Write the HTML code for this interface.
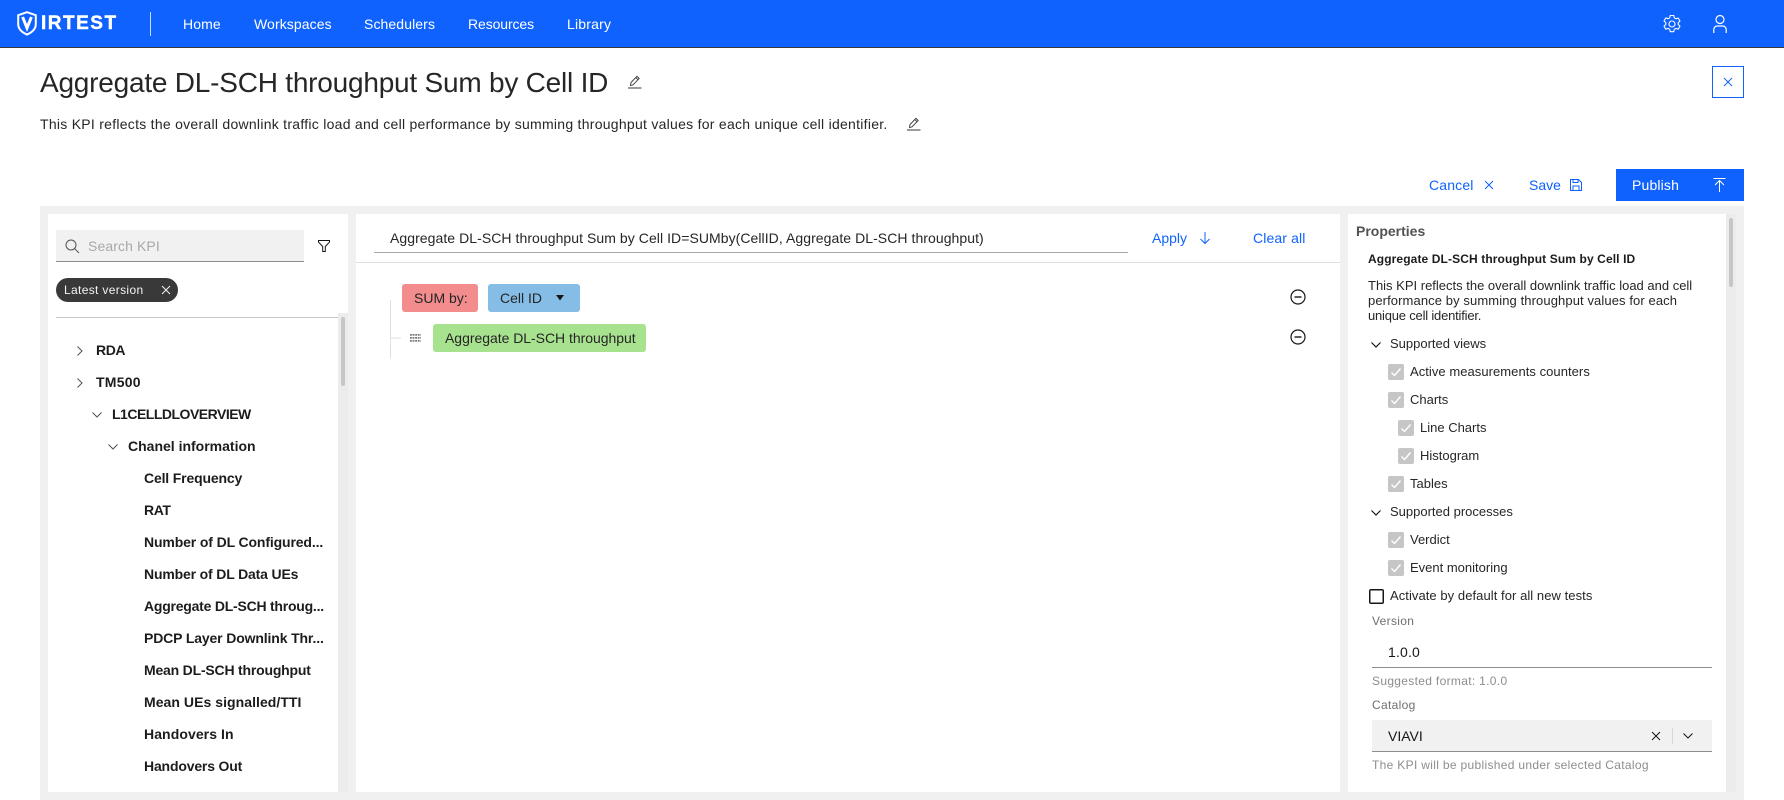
<!DOCTYPE html>
<html lang="en"><head><meta charset="utf-8"><title>Virtest KPI</title>
<style>
html,body{margin:0;padding:0;width:1784px;height:800px;overflow:hidden;background:#fff;font-family:"Liberation Sans",sans-serif;color:#161616}
.a{position:absolute}
.t{position:absolute;height:20px;line-height:20px;white-space:nowrap;font-size:14px}
.b{font-weight:700;color:#1c1c1c}
.w{color:#fff}
.l{color:#0f62fe}
.s{font-size:12px}
.m{font-size:13px}
.h{font-size:12px;letter-spacing:.32px}
.g{color:#6f6f6f}
svg{position:absolute;overflow:visible;fill:none}
.cb{position:absolute;width:16px;height:16px;background:#c6c6c6;border-radius:2px}
.cb svg{left:0;top:0}
</style></head><body>

<!-- NAV -->
<div class="a" style="left:0;top:0;width:1784px;height:47px;background:#0f62fe;border-bottom:1px solid #393939"></div>
<svg style="left:17px;top:11px" width="20" height="25" viewBox="0 0 20 25"><path d="M10 1.200 L18.800 4.200 V13 C18.800 18 14.500 21.600 10 23.600 C5.500 21.600 1.200 18 1.200 13 V4.200 Z" stroke="#fff" stroke-width="2"/><path d="M5.600 6 L10 17 L14.400 6" stroke="#fff" stroke-width="3"/></svg>
<div class="t w b" style="left:41px;top:14px;font-size:19px;letter-spacing:1.500px;color:#fff;-webkit-text-stroke:.4px #fff">IRTEST</div>
<div class="a" style="left:150px;top:12px;width:1px;height:24px;background:#c9dcff"></div>
<div class="t w" style="left:183px;top:14px;letter-spacing:.1px">Home</div>
<div class="t w" style="left:254px;top:14px;letter-spacing:.1px">Workspaces</div>
<div class="t w" style="left:364px;top:14px;letter-spacing:.1px">Schedulers</div>
<div class="t w" style="left:468px;top:14px;letter-spacing:-.1px">Resources</div>
<div class="t w" style="left:567px;top:14px;letter-spacing:.2px">Library</div>
<svg style="left:1662px;top:14px" width="20" height="20" viewBox="0 0 20 20"><path d="M8.200 1.500h3.600l.5 2.400 1.600.9 2.300-.8 1.800 3.100-1.800 1.600v1.800l1.800 1.600-1.800 3.100-2.300-.8-1.600.9-.5 2.400H8.200l-.5-2.400-1.600-.9-2.300.8-1.800-3.100 1.800-1.600V8.600L2 7l1.800-3.100 2.300.8 1.600-.9z" stroke="#fff" stroke-width="1.100" stroke-linejoin="round"/><circle cx="10" cy="10" r="3" stroke="#fff" stroke-width="1.100"/></svg>
<svg style="left:1710px;top:14px" width="20" height="20" viewBox="0 0 20 20"><circle cx="10" cy="5.500" r="4" stroke="#fff" stroke-width="1.200"/><path d="M3.800 19v-3.500a3.500 3.500 0 0 1 3.500-3.500h5.400a3.500 3.500 0 0 1 3.500 3.500V19" stroke="#fff" stroke-width="1.200"/></svg>

<!-- HEADER -->
<div class="t" style="left:40px;top:63px;height:40px;line-height:40px;font-size:28px;letter-spacing:-.22px;color:#262626">Aggregate DL-SCH throughput Sum by Cell ID</div>
<svg style="left:627px;top:74px" width="15" height="15" viewBox="0 0 15 15"><path d="M1 14h13.500" stroke="#393939"/><path d="M3.500 11.500l.5-3L10 2.300l2.200 2.200L6 10.800z M8.800 3.500l2.200 2.200" stroke="#393939" stroke-width=".9"/></svg>
<div class="t" style="left:40px;top:114px;letter-spacing:.27px;color:#262626">This KPI reflects the overall downlink traffic load and cell performance by summing throughput values for each unique cell identifier.</div>
<svg style="left:906px;top:116px" width="15" height="15" viewBox="0 0 15 15"><path d="M1 14h13.500" stroke="#393939"/><path d="M3.500 11.500l.5-3L10 2.300l2.200 2.200L6 10.800z M8.800 3.500l2.200 2.200" stroke="#393939" stroke-width=".9"/></svg>
<div class="a" style="left:1712px;top:66px;width:30px;height:30px;border:1px solid #0f62fe"></div>
<svg style="left:1724px;top:78px" width="8" height="8" viewBox="0 0 8 8"><path d="M0 0l8 8M8 0L0 8" stroke="#0f62fe"/></svg>

<!-- ACTIONS -->
<div class="t l" style="left:1429px;top:175px;letter-spacing:.16px">Cancel</div>
<svg style="left:1485px;top:181px" width="8" height="8" viewBox="0 0 8 8"><path d="M0 0l8 8M8 0L0 8" stroke="#0f62fe"/></svg>
<div class="t l" style="left:1529px;top:175px">Save</div>
<svg style="left:1570px;top:179px" width="12" height="12" viewBox="0 0 12 12"><path d="M.5.5h8l3 3v8H.5z M3 .5v3h5v-3 M3 11.500V7h6v4.500" stroke="#0f62fe"/></svg>
<div class="a" style="left:1616px;top:169px;width:128px;height:32px;background:#0f62fe"></div>
<div class="t w" style="left:1632px;top:175px;letter-spacing:.16px">Publish</div>
<svg style="left:1713px;top:178px" width="13" height="14" viewBox="0 0 13 14"><path d="M.5.500h12M6.500 14V3M2 7l4.500-4.500L11 7" stroke="#fff"/></svg>

<!-- WORK AREA -->
<div class="a" style="left:40px;top:206px;width:1704px;height:594px;background:#f0f0f0"></div>
<div class="a" style="left:48px;top:214px;width:300px;height:578px;background:#fff"></div>
<div class="a" style="left:338px;top:313px;width:10px;height:479px;background:#ececec"></div>
<div class="a" style="left:341px;top:317px;width:4px;height:69px;background:#c6c6c6;border-radius:2px"></div>
<div class="a" style="left:356px;top:214px;width:984px;height:578px;background:#fff"></div>
<div class="a" style="left:1348px;top:214px;width:378px;height:578px;background:#fff"></div>
<div class="a" style="left:1726px;top:214px;width:10px;height:578px;background:#ececec"></div>
<div class="a" style="left:1729px;top:218px;width:4px;height:69px;background:#c6c6c6;border-radius:2px"></div>

<!-- LEFT PANEL -->
<div class="a" style="left:56px;top:230px;width:248px;height:31px;background:#f1f1f1;border-bottom:1px solid #8d8d8d"></div>
<svg style="left:65px;top:239px" width="14" height="14" viewBox="0 0 14 14"><circle cx="6" cy="6" r="5" stroke="#525252"/><path d="M9.700 9.700L14 14" stroke="#525252"/></svg>
<div class="t" style="left:88px;top:236px;color:#a8a8a8;letter-spacing:.1px">Search KPI</div>
<svg style="left:318px;top:240px" width="12" height="12" viewBox="0 0 12 12"><path d="M.5.500h11v1.600L7.300 6.500v5H4.700v-5L.5 2.100z" stroke="#161616"/></svg>
<div class="a" style="left:56px;top:278px;width:122px;height:24px;background:#393939;border-radius:12px"></div>
<div class="t s" style="left:64px;top:280px;color:#f4f4f4;letter-spacing:.34px">Latest version</div>
<svg style="left:162px;top:286px" width="8" height="8" viewBox="0 0 8 8"><path d="M0 0l8 8M8 0L0 8" stroke="#f4f4f4"/></svg>
<div class="a" style="left:56px;top:317px;width:282px;height:1px;background:#c6c6c6"></div>

<svg style="left:77px;top:346px" width="6" height="10" viewBox="0 0 6 10"><path d="M.5.500l4.500 4.500-4.500 4.500" stroke="#525252"/></svg>
<div class="t b" style="left:96px;top:340px;letter-spacing:-.4px">RDA</div>
<svg style="left:77px;top:378px" width="6" height="10" viewBox="0 0 6 10"><path d="M.5.500l4.500 4.500-4.500 4.500" stroke="#525252"/></svg>
<div class="t b" style="left:96px;top:372px;letter-spacing:.25px">TM500</div>
<svg style="left:92px;top:412px" width="10" height="6" viewBox="0 0 10 6"><path d="M.5.500L5 5 9.500.5" stroke="#525252"/></svg>
<div class="t b" style="left:112px;top:404px;letter-spacing:-.5px">L1CELLDLOVERVIEW</div>
<svg style="left:108px;top:444px" width="10" height="6" viewBox="0 0 10 6"><path d="M.5.500L5 5 9.500.5" stroke="#525252"/></svg>
<div class="t b" style="left:128px;top:436px">Chanel information</div>
<div class="t b" style="left:144px;top:468px;letter-spacing:-.16px">Cell Frequency</div>
<div class="t b" style="left:144px;top:500px;letter-spacing:-.4px">RAT</div>
<div class="t b" style="left:144px;top:532px;letter-spacing:-.13px">Number of DL Configured...</div>
<div class="t b" style="left:144px;top:564px;letter-spacing:-.16px">Number of DL Data UEs</div>
<div class="t b" style="left:144px;top:596px;letter-spacing:-.23px">Aggregate DL-SCH throug...</div>
<div class="t b" style="left:144px;top:628px;letter-spacing:-.14px">PDCP Layer Downlink Thr...</div>
<div class="t b" style="left:144px;top:660px;letter-spacing:-.2px">Mean DL-SCH throughput</div>
<div class="t b" style="left:144px;top:692px;letter-spacing:.05px">Mean UEs signalled/TTI</div>
<div class="t b" style="left:144px;top:724px;letter-spacing:.08px">Handovers In</div>
<div class="t b" style="left:144px;top:756px;letter-spacing:-.17px">Handovers Out</div>

<!-- CENTER PANEL -->
<div class="t" style="left:390px;top:228px;letter-spacing:.06px;color:#262626">Aggregate DL-SCH throughput Sum by Cell ID=SUMby(CellID, Aggregate DL-SCH throughput)</div>
<div class="a" style="left:374px;top:252px;width:754px;height:1px;background:#a8a8a8"></div>
<div class="a" style="left:356px;top:262px;width:984px;height:1px;background:#e0e0e0"></div>
<div class="t l" style="left:1152px;top:228px">Apply</div>
<svg style="left:1200px;top:232px" width="10" height="12" viewBox="0 0 10 12"><path d="M5 0v11.500M.5 7l4.500 4.500L9.500 7" stroke="#0f62fe"/></svg>
<div class="t l" style="left:1253px;top:228px;letter-spacing:.12px">Clear all</div>

<div class="a" style="left:390px;top:300px;width:1px;height:58px;background:#dde1e6"></div>
<div class="a" style="left:391px;top:337px;width:10px;height:2px;background:#edeff3"></div>
<div class="a" style="left:402px;top:284px;width:76px;height:28px;background:#f28c8d;border-radius:3px"></div>
<div class="t" style="left:414px;top:288px;color:#262626">SUM by:</div>
<div class="a" style="left:488px;top:284px;width:92px;height:28px;background:#85bde6;border-radius:3px"></div>
<div class="t" style="left:500px;top:288px;color:#262626">Cell ID</div>
<svg style="left:555px;top:295px" width="10" height="6" viewBox="0 0 10 6"><path d="M1 0h8L5 5.500z" fill="#161616"/></svg>
<svg style="left:410px;top:334px" width="11" height="8" viewBox="0 0 11 8"><path d="M0 .9h11M0 3.900h11M0 6.900h11" stroke="#777" stroke-width="1.800" stroke-dasharray="1.800 .8"/></svg>
<div class="a" style="left:433px;top:324px;width:213px;height:28px;background:#a7e28f;border-radius:3px"></div>
<div class="t" style="left:445px;top:328px;letter-spacing:-.03px;color:#262626">Aggregate DL-SCH throughput</div>
<svg style="left:1290px;top:289px" width="16" height="16" viewBox="0 0 16 16"><circle cx="8" cy="8" r="7" stroke="#161616" stroke-width="1.200"/><path d="M4.500 8h7" stroke="#161616" stroke-width="1.400"/></svg>
<svg style="left:1290px;top:329px" width="16" height="16" viewBox="0 0 16 16"><circle cx="8" cy="8" r="7" stroke="#161616" stroke-width="1.200"/><path d="M4.500 8h7" stroke="#161616" stroke-width="1.400"/></svg>

<!-- RIGHT PANEL -->
<div class="t b" style="left:1356px;top:221px;color:#525252">Properties</div>
<div class="t b s" style="left:1368px;top:249px;letter-spacing:.11px">Aggregate DL-SCH throughput Sum by Cell ID</div>
<div class="t m" style="left:1368px;top:276px;color:#262626">This KPI reflects the overall downlink traffic load and cell</div>
<div class="t m" style="left:1368px;top:291px;letter-spacing:.1px;color:#262626">performance by summing throughput values for each</div>
<div class="t m" style="left:1368px;top:306px;letter-spacing:-.2px;color:#262626">unique cell identifier.</div>

<svg style="left:1371px;top:342px" width="10" height="6" viewBox="0 0 10 6"><path d="M.5.500L5 5 9.500.5" stroke="#161616" stroke-width="1.200"/></svg>
<div class="t m" style="left:1390px;top:334px;color:#262626">Supported views</div>
<div class="cb" style="left:1388px;top:364px"><svg width="16" height="16" viewBox="0 0 16 16"><path d="M3.500 8.500l3 3 6-7" stroke="#fff" stroke-width="1.400"/></svg></div>
<div class="t m" style="left:1410px;top:362px;letter-spacing:.05px;color:#262626">Active measurements counters</div>
<div class="cb" style="left:1388px;top:392px"><svg width="16" height="16" viewBox="0 0 16 16"><path d="M3.500 8.500l3 3 6-7" stroke="#fff" stroke-width="1.400"/></svg></div>
<div class="t m" style="left:1410px;top:390px;color:#262626">Charts</div>
<div class="cb" style="left:1398px;top:420px"><svg width="16" height="16" viewBox="0 0 16 16"><path d="M3.500 8.500l3 3 6-7" stroke="#fff" stroke-width="1.400"/></svg></div>
<div class="t m" style="left:1420px;top:418px;color:#262626">Line Charts</div>
<div class="cb" style="left:1398px;top:448px"><svg width="16" height="16" viewBox="0 0 16 16"><path d="M3.500 8.500l3 3 6-7" stroke="#fff" stroke-width="1.400"/></svg></div>
<div class="t m" style="left:1420px;top:446px;color:#262626">Histogram</div>
<div class="cb" style="left:1388px;top:476px"><svg width="16" height="16" viewBox="0 0 16 16"><path d="M3.500 8.500l3 3 6-7" stroke="#fff" stroke-width="1.400"/></svg></div>
<div class="t m" style="left:1410px;top:474px;color:#262626">Tables</div>

<svg style="left:1371px;top:510px" width="10" height="6" viewBox="0 0 10 6"><path d="M.5.500L5 5 9.500.5" stroke="#161616" stroke-width="1.200"/></svg>
<div class="t m" style="left:1390px;top:502px;color:#262626">Supported processes</div>
<div class="cb" style="left:1388px;top:532px"><svg width="16" height="16" viewBox="0 0 16 16"><path d="M3.500 8.500l3 3 6-7" stroke="#fff" stroke-width="1.400"/></svg></div>
<div class="t m" style="left:1410px;top:530px;color:#262626">Verdict</div>
<div class="cb" style="left:1388px;top:560px"><svg width="16" height="16" viewBox="0 0 16 16"><path d="M3.500 8.500l3 3 6-7" stroke="#fff" stroke-width="1.400"/></svg></div>
<div class="t m" style="left:1410px;top:558px;color:#262626">Event monitoring</div>
<div class="a" style="left:1369px;top:589px;width:13px;height:13px;border:1px solid #161616;box-shadow:inset 0 0 0 .5px #161616;border-radius:2px"></div>
<div class="t m" style="left:1390px;top:586px;letter-spacing:.06px;color:#262626">Activate by default for all new tests</div>

<div class="t h g" style="left:1372px;top:611px">Version</div>
<div class="t" style="left:1388px;top:642px;letter-spacing:.16px">1.0.0</div>
<div class="a" style="left:1372px;top:667px;width:340px;height:1px;background:#8d8d8d"></div>
<div class="t h" style="left:1372px;top:671px;color:#8d8d8d">Suggested format: 1.0.0</div>
<div class="t h g" style="left:1372px;top:695px">Catalog</div>
<div class="a" style="left:1372px;top:720px;width:340px;height:31px;background:#f1f1f1;border-bottom:1px solid #8d8d8d"></div>
<div class="t" style="left:1388px;top:726px">VIAVI</div>
<svg style="left:1652px;top:732px" width="8" height="8" viewBox="0 0 8 8"><path d="M0 0l8 8M8 0L0 8" stroke="#161616"/></svg>
<div class="a" style="left:1672px;top:728px;width:1px;height:16px;background:#d8d8d8"></div>
<svg style="left:1683px;top:733px" width="10" height="6" viewBox="0 0 10 6"><path d="M.5.500L5 5 9.500.5" stroke="#161616"/></svg>
<div class="t h" style="left:1372px;top:755px;color:#8d8d8d">The KPI will be published under selected Catalog</div>
</body></html>
